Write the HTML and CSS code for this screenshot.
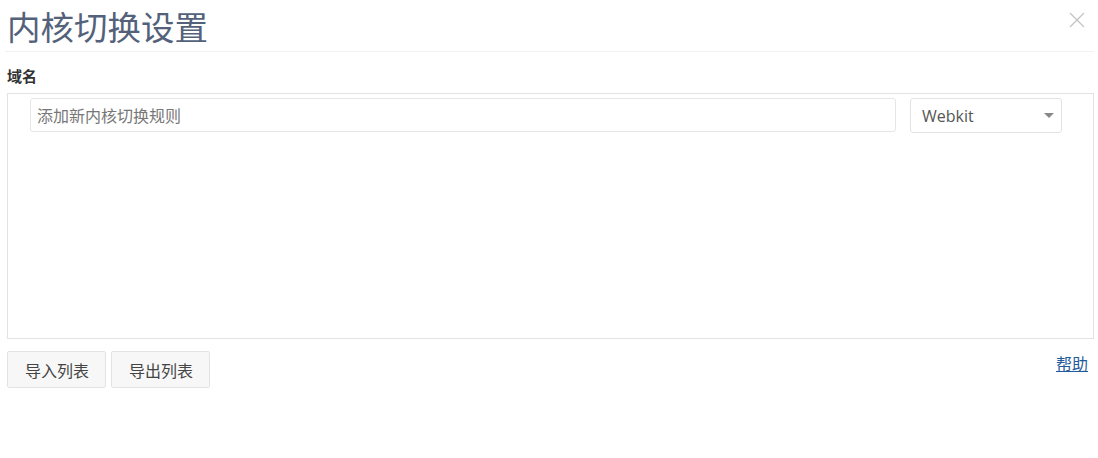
FILE: index.html
```html
<!DOCTYPE html>
<html lang="zh-CN">
<head>
    <meta charset="UTF-8">
    <title>内核切换设置</title>
    <link rel="stylesheet" href="styles.css">
</head>
<body>
    <div class="dialog">
        <header class="dialog-header">
            <h1 class="dialog-title">内核切换设置</h1>
            <span class="close-btn">
                <svg width="16" height="16" viewBox="0 0 16 16">
                    <path d="M1 1 L15 15 M15 1 L1 15" stroke="#c4c4c4" stroke-width="1.3" fill="none"/>
                </svg>
            </span>
        </header>

        <div class="field-label">域名</div>

        <div class="rule-box">
            <div class="rule-row">
                <input class="rule-input" type="text" placeholder="添加新内核切换规则">
                <div class="kernel-select">
                    <span>Webkit</span>
                    <span class="caret"></span>
                </div>
            </div>
        </div>

        <div class="dialog-footer">
            <div class="btn-group">
                <button class="btn">导入列表</button>
                <button class="btn">导出列表</button>
            </div>
            <a class="help-link" href="#">帮助</a>
        </div>
    </div>
</body>
</html>
```

FILE: styles.css
```css
body {
  margin: 0;
  padding: 0;
  background-color: #fff;
  font-family: "Noto Sans CJK SC", "Noto Sans", sans-serif;
  color: #333;
}

.dialog {
  padding: 0 4px 0 7px;
}

.dialog-header {
  display: flex;
  justify-content: space-between;
  align-items: flex-start;
  border-bottom: 1px solid #f2f2f2;
  margin-left: -2px;
  padding-left: 2px;
  height: 51px;
}

.dialog-title {
  margin: 0;
  padding-top: 2px;
  font-size: 33.5px;
  font-weight: normal;
  line-height: 48px;
  color: #53627a;
}

.close-btn {
  margin-top: 9px;
  margin-right: 9px;
}

.field-label {
  margin-top: 13px;
  font-size: 15px;
  font-weight: bold;
  line-height: 22px;
  color: #333;
}

.rule-box {
  margin-top: 6px;
  height: 246px;
  box-sizing: border-box;
  border: 1px solid #e3e3e3;
  padding: 4px 31px 0 22px;
}

.rule-row {
  display: flex;
  gap: 14px;
}

.rule-input {
  flex: 1;
  height: 34px;
  box-sizing: border-box;
  border: 1px solid #e6e6e6;
  border-radius: 3px;
  padding: 0 6px;
  font-family: inherit;
  font-size: 16px;
  color: #555;
  outline: none;
}

.rule-input::placeholder {
  color: #777;
}

.kernel-select {
  width: 152px;
  height: 35px;
  box-sizing: border-box;
  border: 1px solid #e3e3e3;
  border-radius: 3px;
  display: flex;
  align-items: center;
  justify-content: space-between;
  padding: 0 7px 0 11px;
  font-family: "Open Sans", sans-serif;
  font-size: 16px;
  color: #555;
}

.caret {
  width: 0;
  height: 0;
  border-left: 5px solid transparent;
  border-right: 5px solid transparent;
  border-top: 5px solid #888;
}

.dialog-footer {
  display: flex;
  justify-content: space-between;
  align-items: flex-start;
  margin-top: 12px;
}

.btn-group {
  display: flex;
  gap: 5px;
}

.btn {
  height: 37px;
  padding: 0 16px 0 17px;
  background-color: #f7f7f7;
  border: 1px solid #e3e3e3;
  border-radius: 2px;
  font-family: inherit;
  font-size: 16px;
  color: #444;
}

.help-link {
  margin-top: 0;
  margin-right: 6px;
  font-size: 16px;
  color: #1f5b9c;
  text-decoration: underline;
}
```
